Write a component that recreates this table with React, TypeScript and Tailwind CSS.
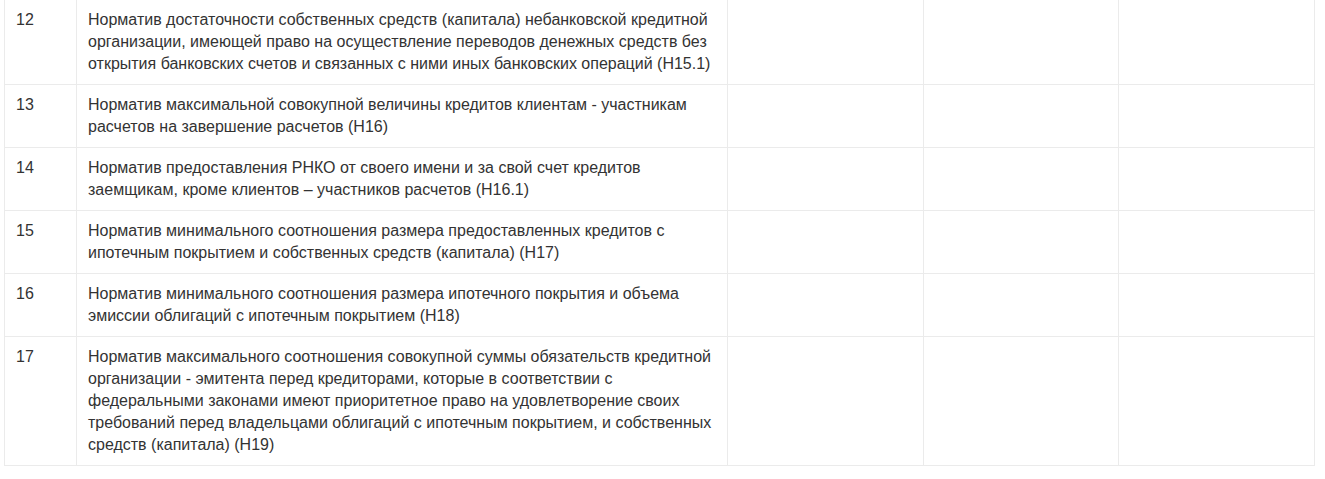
const rows: [string, string][] = [
  [
    "12",
    "Норматив достаточности собственных средств (капитала) небанковской кредитной организации, имеющей право на осуществление переводов денежных средств без открытия банковских счетов и связанных с ними иных банковских операций (Н15.1)",
  ],
  [
    "13",
    "Норматив максимальной совокупной величины кредитов клиентам - участникам расчетов на завершение расчетов (Н16)",
  ],
  [
    "14",
    "Норматив предоставления РНКО от своего имени и за свой счет кредитов заемщикам, кроме клиентов – участников расчетов (Н16.1)",
  ],
  [
    "15",
    "Норматив минимального соотношения размера предоставленных кредитов с ипотечным покрытием и собственных средств (капитала) (Н17)",
  ],
  [
    "16",
    "Норматив минимального соотношения размера ипотечного покрытия и объема эмиссии облигаций с ипотечным покрытием (Н18)",
  ],
  [
    "17",
    "Норматив максимального соотношения совокупной суммы обязательств кредитной организации - эмитента перед кредиторами, которые в соответствии с федеральными законами имеют приоритетное право на удовлетворение своих требований перед владельцами облигаций с ипотечным покрытием, и собственных средств (капитала) (Н19)",
  ],
];

export default function App() {
  return (
    <div className="min-h-[479px] bg-white pl-[4px] font-['Liberation_Sans',Arial,sans-serif] text-[16px] leading-[22px] text-[#333]">
      <table className="-mt-px w-[1310px] table-fixed border-collapse">
        <colgroup>
          <col className="w-[72px]" />
          <col className="w-[651px]" />
          <col className="w-[196px]" />
          <col className="w-[195px]" />
          <col className="w-[196px]" />
        </colgroup>
        <tbody>
          {rows.map(([num, text]) => (
            <tr key={num}>
              <td className="border border-[#ebebeb] px-[11px] pt-[9px] pb-[9px] align-top">{num}</td>
              <td className="border border-[#ebebeb] px-[11px] pt-[9px] pb-[9px] align-top">{text}</td>
              <td className="border border-[#ebebeb]" />
              <td className="border border-[#ebebeb]" />
              <td className="border border-[#ebebeb]" />
            </tr>
          ))}
        </tbody>
      </table>
    </div>
  );
}
